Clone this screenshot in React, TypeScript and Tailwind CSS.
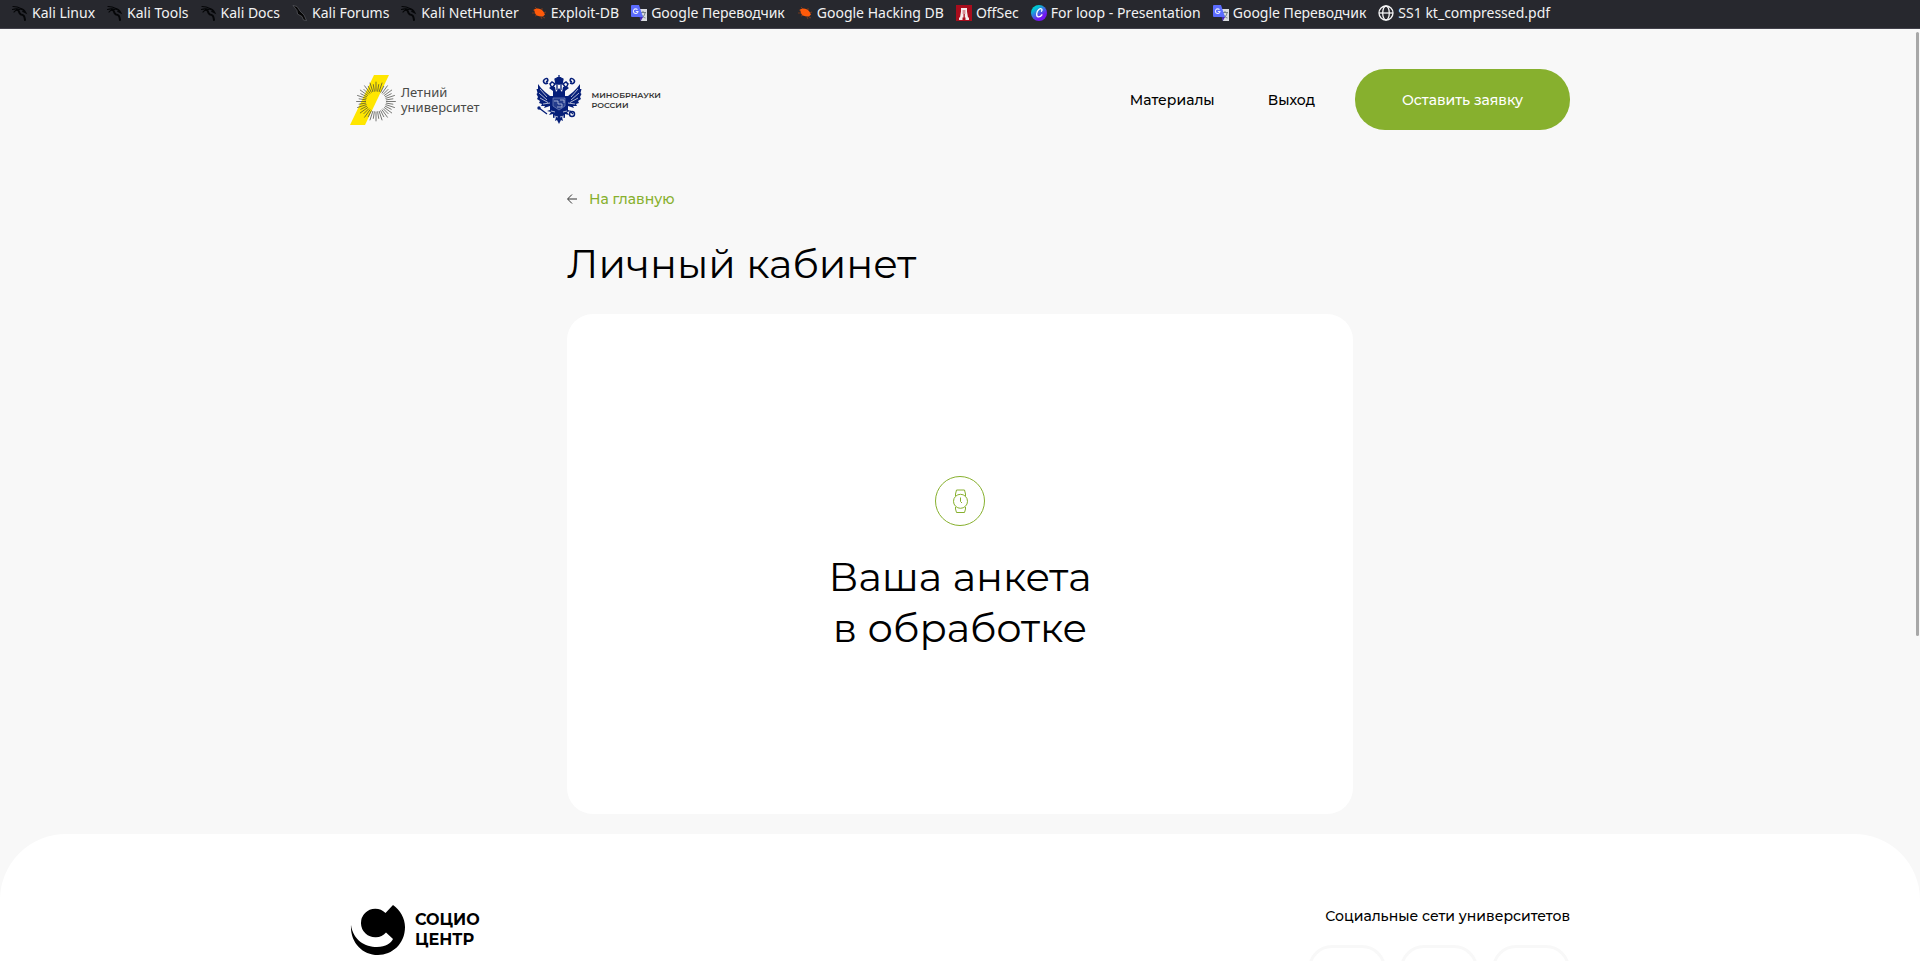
import React from "react";

type Kind = "kali" | "forum" | "bug" | "translate" | "offsec" | "canva" | "globe";

function Dragon() {
  return (
    <svg viewBox="0 0 16 16" className="size-4 shrink-0" fill="none" stroke="#050608" strokeLinecap="round" aria-hidden="true">
      <path d="M1 1.500C4 1.500 7 2.500 9.500 3.800M.5 4.500C4 3 6 4 8 4.500M2 7C3 5.500 4 5 6 5" strokeWidth="1.200" />
      <path d="M5 4.500C8 5 6 8.500 9 9.500C12 9.800 12.500 11.500 13 15" strokeWidth="2" />
      <path d="M9 4C11 4 12.500 5.500 13.500 7.500L11 6.300" strokeWidth="1.600" />
    </svg>
  );
}

function MarkIcon({ kind }: { kind: Kind }) {
  switch (kind) {
    case "kali":
      return <Dragon />;
    case "forum":
      return (
        <svg viewBox="0 0 16 16" className="size-4 shrink-0" aria-hidden="true">
          <path d="M1 .5 5 1.500 8 6 12 10 14.500 15.500 11.500 15 10 11.500 5.500 9 5 5.500Z" fill="#050505" stroke="#66686e" strokeWidth=".6" />
        </svg>
      );
    case "bug":
      return (
        <svg viewBox="0 0 16 16" className="size-4 shrink-0" aria-hidden="true">
          <path d="M2 5 6 6M4 2 7 5M1 8 6 8M11 5V3M12 8 15 7M12 12 14 13M7 10 4 11M10 12 11 14" stroke="#8b3c18" strokeWidth=".8" />
          <path d="M3 4.500C6 2.500 10 3.500 12 6L14 9.500 12 11.500C8 12 4.500 10.500 4 8Z" fill="#ff5a0a" />
        </svg>
      );
    case "translate":
      return (
        <svg viewBox="0 0 16 16" className="size-4 shrink-0" aria-hidden="true">
          <path d="M7 4h9v12h-6z" fill="#dadce0" />
          <path d="M9 7.500h6M12 6v1.500M14 8c-.5 3-2 4-4 5M10.500 9.500c1 2 2 3 4 3.500" stroke="#758186" fill="none" />
          <path d="M1 0h7l4 12H1a1 1 0 0 1-1-1V1a1 1 0 0 1 1-1z" fill="#5b6cff" />
          <path d="M8.500 12H12L9.800 16z" fill="#4527b8" />
          <path d="M6.500 4.700A2.300 2.300 0 1 0 7 6.500H4.800" stroke="#e8edff" fill="none" strokeWidth="1.100" />
        </svg>
      );
    case "offsec":
      return (
        <svg viewBox="0 0 16 16" className="size-4 shrink-0" aria-hidden="true">
          <path d="M0 0h16v16H0z" fill="#a90d1d" />
          <path d="M5 3h6v3.500l1 6H13V15H9.500v-2.500h-.7V9H7.500v3.500H6.500V15H3v-2.500h1l1-6z" fill="#f5edee" />
          <path d="M7.200 5v4M8.800 5v4" stroke="#a90d1d" strokeWidth=".6" />
        </svg>
      );
    case "canva":
      return (
        <svg viewBox="0 0 16 16" className="size-4 shrink-0" aria-hidden="true">
          <defs>
            <linearGradient id="canva" x1="0" y1="0" x2=".7" y2="1">
              <stop stopColor="#00c9d2" offset=".25" />
              <stop stopColor="#7416f4" offset=".8" />
            </linearGradient>
          </defs>
          <circle cx="8" cy="8" r="8" fill="url(#canva)" />
          <path d="M10.500 6.200C12 4.300 10 2.800 7.800 4.500 5.300 6.500 4.800 11.500 7.300 11.900 8.900 12.100 10.200 11 10.900 9.800" stroke="#fff" strokeWidth="1.300" fill="none" strokeLinecap="round" />
        </svg>
      );
    case "globe":
      return (
        <svg viewBox="0 0 16 16" className="size-4 shrink-0" fill="none" stroke="#f5f5f6" strokeWidth="1.300" aria-hidden="true">
          <circle cx="8" cy="8" r="7" />
          <ellipse cx="8" cy="8" rx="3.300" ry="7" />
          <path d="M1 8h14" />
        </svg>
      );
  }
}

const bookmarks: { label: string; kind: Kind }[] = [
  { label: "Kali Linux", kind: "kali" },
  { label: "Kali Tools", kind: "kali" },
  { label: "Kali Docs", kind: "kali" },
  { label: "Kali Forums", kind: "forum" },
  { label: "Kali NetHunter", kind: "kali" },
  { label: "Exploit-DB", kind: "bug" },
  { label: "Google Переводчик", kind: "translate" },
  { label: "Google Hacking DB", kind: "bug" },
  { label: "OffSec", kind: "offsec" },
  { label: "For loop - Presentation", kind: "canva" },
  { label: "Google Переводчик", kind: "translate" },
  { label: "SS1 kt_compressed.pdf", kind: "globe" },
];

function Sunburst() {
  const rays = Array.from({ length: 40 }, (_, i) => {
    const a = (i * Math.PI) / 20;
    const outer = i % 2 ? 17.5 : 19.8;
    return `M${26 + 10 * Math.cos(a)} ${26.5 + 10 * Math.sin(a)}L${26 + outer * Math.cos(a)} ${26.5 + outer * Math.sin(a)}`;
  }).join("");
  return (
    <svg viewBox="0 0 47 50" className="h-[50px] w-[47px]" aria-hidden="true">
      <path d="M24 0H39L15 50H0Z" fill="#ffe600" />
      <path d={rays} stroke="#3f403c" strokeWidth=".7" />
    </svg>
  );
}

function Eagle() {
  return (
    <svg viewBox="0 0 46 50" className="h-[50px] w-[46px]" aria-hidden="true">
      <g id="half">
        <path d="M23 13 20 17 19 12 16 11 13 13 17 16 17 21 14 21 9 17 5 13 2 9 2 14 .5 14 1.500 18 .5 19 2 22 1 24 4 26 3 28 6 29 5 31 9 31 8 33 14 31 14 35 11 36 15 37 13 40 17 39 17 43 20 42 19 46 21 45 23 49Z" fill="#061f79" />
        <path d="M4 14 11 22M3 18 11 25M4 23 12 27.500M7 29 14 28M15 36 19 37M18 41 22 42" stroke="#f8f8f8" strokeWidth=".7" />
        <path d="M12 8C8 10 6 6 9 4S13 6 10 7M14 9 16 13 19 9 16 7Z" stroke="#061f79" strokeWidth="1.500" fill="none" />
      </g>
      <use href="#half" transform="translate(46 0) scale(-1 1)" />
      <path d="M19 4 23 2 27 4 26 9H20ZM23 0V4M21 10V15M25 10V15" fill="#061f79" stroke="#061f79" strokeWidth="1.300" />
      <path d="M17 23h12v8l-6 4-6-4z" fill="#233b8b" stroke="#8b9aca" strokeWidth=".6" />
      <path d="M18 26h4v3h4v3h-5M24 25h4v3" stroke="#bac5e2" strokeWidth=".8" fill="none" />
      <path d="m3 33 8 6M34 36l3 3" stroke="#061f79" strokeWidth="1.300" />
      <circle cx="3" cy="33" r="1.700" fill="#061f79" />
      <circle cx="36" cy="39" r="2.500" fill="none" stroke="#061f79" strokeWidth="1.500" />
    </svg>
  );
}

export default function App() {
  return (
    <div className="relative flex h-screen flex-col overflow-hidden bg-[#f8f8f8] font-['Montserrat','Inter',sans-serif] text-black">
      <nav aria-label="Закладки" className="flex h-[29px] shrink-0 gap-3 border-b border-[#42414b] bg-[#27282e] px-3 pb-0.5 font-['Noto_Sans',sans-serif] text-sm text-[#f2f2f3]">
        {bookmarks.map((b, i) => (
          <a key={i} href="#" className="flex shrink-0 items-center gap-1 whitespace-nowrap">
            <MarkIcon kind={b.kind} />
            {b.label}
          </a>
        ))}
      </nav>

      <header className="mx-auto mt-10 flex w-full max-w-[1220px] shrink-0 items-center">
        <a href="#" className="flex items-center gap-1 font-['Noto_Sans',sans-serif] text-[13px] leading-[15px] text-[#4a4b48]">
          <Sunburst />
          <span>Летний<br />университет</span>
        </a>
        <a href="#" className="ml-14 flex items-center gap-2.5 text-[8px] leading-[10px] font-semibold text-[#333]">
          <Eagle />
          <span>МИНОБРНАУКИ<br />РОССИИ</span>
        </a>
        <nav aria-label="Меню" className="ml-auto flex items-center text-sm font-medium">
          <a href="#" className="mr-[53px]">Материалы</a>
          <a href="#" className="mr-10">Выход</a>
          <button type="button" className="h-[61px] w-[215px] rounded-[30px] bg-[#87b02e] text-white">Оставить заявку</button>
        </nav>
      </header>

      <main className="mx-auto w-full max-w-[786px] shrink-0 pt-[57px]">
        <a href="#" className="flex items-center gap-3 text-sm leading-6 font-medium text-[#87b02e]">
          <svg viewBox="0 0 10 10" className="size-2.5" fill="none" stroke="#333" aria-hidden="true">
            <path d="M10 5H1M5 .5.500 5 5 9.500" />
          </svg>
          На главную
        </a>
        <h1 className="mt-[27px] text-[40px] leading-[52px] font-normal">Личный кабинет</h1>
        <section className="mt-6 flex h-[500px] flex-col items-center justify-center rounded-[26px] bg-white">
          <svg viewBox="0 0 50 50" className="size-[50px]" fill="none" stroke="#87b02e" aria-hidden="true">
            <circle cx="25" cy="25" r="24.500" />
            <circle cx="25.500" cy="25.300" r="7" />
            <path d="M20.500 20V18L21.500 14H29.500L30.500 18V20M20.500 31V33L21.500 36.500H29.500L30.500 33V31M25.500 21.500V25.500L27 27" />
          </svg>
          <h2 className="mt-[25px] text-center text-[40px] leading-[51px] font-normal">Ваша анкета<br />в обработке</h2>
        </section>
      </main>

      <footer className="mt-5 grow rounded-t-[66px] bg-white">
        <div className="mx-auto flex w-full max-w-[1220px] items-start justify-between">
          <a href="#" className="mt-[71px] flex items-center gap-2.5 text-base leading-5 font-bold">
            <svg viewBox="0 0 55 50" className="h-[50px] w-[55px]" aria-hidden="true">
              <path d="M1 20C3 35 15 42 27 42C36 42 41 38 43 34L36 27.500A14.300 14.300 0 1 1 35.500 8L43 0C50 5 55 13 55 22C55 39 42 50 28 50C12 50 0 37 1 20Z" />
            </svg>
            <span>СОЦИО<br />ЦЕНТР</span>
          </a>
          <div className="mt-[70px] flex flex-col items-end">
            <h3 className="text-sm leading-6 font-medium">Социальные сети университетов</h3>
            <div className="mt-[17px] flex gap-[14px]">
              <a href="#" aria-label="ВКонтакте" className="size-[78px] rounded-[24px] border-[3px] border-[#f8f8f8]" />
              <a href="#" aria-label="Telegram" className="size-[78px] rounded-[24px] border-[3px] border-[#f8f8f8]" />
              <a href="#" aria-label="YouTube" className="size-[78px] rounded-[24px] border-[3px] border-[#f8f8f8]" />
            </div>
          </div>
        </div>
      </footer>
      <div className="absolute top-8 right-px h-[604px] w-[3px] rounded-full bg-[#a8a8a8]" />
    </div>
  );
}
